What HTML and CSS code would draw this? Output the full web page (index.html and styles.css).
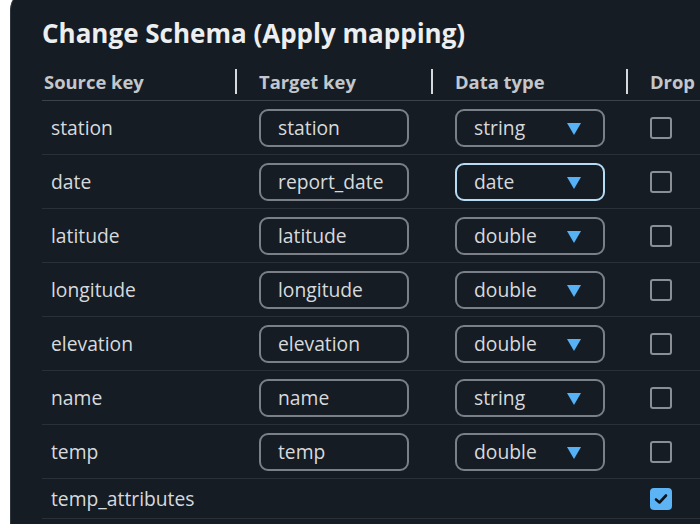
FILE: index.html
```html
<!DOCTYPE html>
<html>
<head>
<meta charset="utf-8">
<link rel="stylesheet" href="styles.css">
</head>
<body>
<div class="panel">
  <h1 class="title">Change Schema (Apply mapping)</h1>
  <div class="table">
    <div class="head">
      <div class="hcell first">Source key</div>
      <div class="hcell">Target key</div>
      <div class="hcell">Data type</div>
      <div class="hcell">Drop</div>
    </div>
    <div class="row">
      <div class="src">station</div>
      <div class="cell"><div class="input">station</div></div>
      <div class="cell"><div class="select">string<span class="tri"></span></div></div>
      <div class="cell"><span class="check"></span></div>
    </div>
    <div class="row">
      <div class="src">date</div>
      <div class="cell"><div class="input">report_date</div></div>
      <div class="cell"><div class="select focus">date<span class="tri"></span></div></div>
      <div class="cell"><span class="check"></span></div>
    </div>
    <div class="row">
      <div class="src">latitude</div>
      <div class="cell"><div class="input">latitude</div></div>
      <div class="cell"><div class="select">double<span class="tri"></span></div></div>
      <div class="cell"><span class="check"></span></div>
    </div>
    <div class="row">
      <div class="src">longitude</div>
      <div class="cell"><div class="input">longitude</div></div>
      <div class="cell"><div class="select">double<span class="tri"></span></div></div>
      <div class="cell"><span class="check"></span></div>
    </div>
    <div class="row">
      <div class="src">elevation</div>
      <div class="cell"><div class="input">elevation</div></div>
      <div class="cell"><div class="select">double<span class="tri"></span></div></div>
      <div class="cell"><span class="check"></span></div>
    </div>
    <div class="row">
      <div class="src">name</div>
      <div class="cell"><div class="input">name</div></div>
      <div class="cell"><div class="select">string<span class="tri"></span></div></div>
      <div class="cell"><span class="check"></span></div>
    </div>
    <div class="row">
      <div class="src">temp</div>
      <div class="cell"><div class="input">temp</div></div>
      <div class="cell"><div class="select">double<span class="tri"></span></div></div>
      <div class="cell"><span class="check"></span></div>
    </div>
    <div class="row short">
      <div class="src">temp_attributes</div>
      <div class="cell"></div>
      <div class="cell"></div>
      <div class="cell"><span class="check on"><svg width="14" height="12" viewBox="0 0 14 12"><path d="M2 6.5 L5.5 9.5 L12 2.5" fill="none" stroke="#0f141a" stroke-width="2.6" stroke-linecap="round" stroke-linejoin="round"/></svg></span></div>
    </div>
  </div>
</div>
</body>
</html>
```
FILE: styles.css
```css
html, body {
  margin: 0;
  padding: 0;
  background: #ffffff;
  overflow: hidden;
  height: 524px;
}
body {
  font-family: "Open Sans", "Noto Sans", sans-serif;
}
.panel {
  margin: -10px 0 0 10px;
  width: 690px;
  height: 534px;
  box-sizing: border-box;
  border: 1px solid #2f3640;
  border-right: none;
  border-bottom: none;
  border-radius: 20px 0 0 0;
  background: #161c24;
  padding: 25px 0 0 31px;
  overflow: hidden;
}
.title {
  margin: 0;
  font-size: 26px;
  line-height: 34px;
  font-weight: 700;
  color: #eceef0;
}
.table {
  margin-top: 12px;
}
.head, .row {
  display: grid;
  grid-template-columns: 193px 196px 195px 1fr;
  align-items: center;
}
.head {
  height: 38px;
  border-bottom: 1px solid #3c424b;
}
.hcell {
  display: flex;
  align-items: center;
  font-size: 18.4px;
  font-weight: 700;
  color: #c3c7cc;
  white-space: nowrap;
}
.hcell.first {
  padding-left: 2px;
}
.hcell:not(.first)::before {
  content: "";
  flex-shrink: 0;
  width: 2px;
  height: 25px;
  background: #d5d8dc;
  margin-right: 22px;
}
.row {
  height: 53px;
  border-bottom: 1px solid #2a3038;
}
.row.short {
  height: 39px;
}
.src {
  padding-left: 9px;
  font-size: 19.3px;
  color: #d7dadd;
  white-space: nowrap;
}
.cell {
  padding-left: 24px;
  display: flex;
  align-items: center;
}
.input, .select {
  box-sizing: border-box;
  width: 150px;
  height: 38px;
  border: 2px solid #7b8088;
  border-radius: 9px;
  padding-left: 17px;
  display: flex;
  align-items: center;
  font-size: 19.3px;
  color: #d7dadd;
  white-space: nowrap;
}
.select {
  position: relative;
}
.select.focus {
  border-color: #b6dcf5;
}
.tri {
  position: absolute;
  right: 22px;
  top: 12px;
  width: 0;
  height: 0;
  border-left: 7px solid transparent;
  border-right: 7px solid transparent;
  border-top: 12px solid #56b2f4;
}
.check {
  box-sizing: border-box;
  width: 22px;
  height: 22px;
  border: 2px solid #8a8f96;
  border-radius: 3px;
  display: flex;
  align-items: center;
  justify-content: center;
}
.check.on {
  background: #5db4f5;
  border-color: #5db4f5;
  border-radius: 4px;
}
```
